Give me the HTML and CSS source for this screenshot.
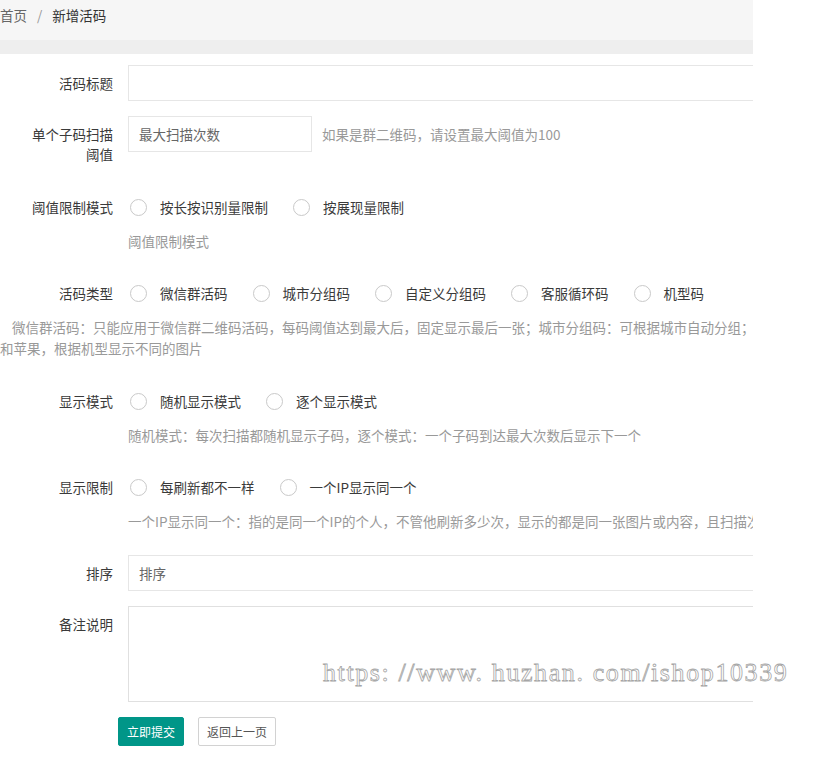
FILE: index.html
```html
<!DOCTYPE html>
<html lang="zh-CN">
<head>
<meta charset="utf-8">
<title>新增活码</title>
<link rel="stylesheet" href="styles.css">
</head>
<body>
<div class="frame">
  <div class="page">
    <div class="crumb"><span class="c-link">首页</span><span class="c-sep">/</span><span class="c-cur">新增活码</span></div>
    <div class="band"></div>
    <form class="form">
      <div class="item">
        <label class="lbl">活码标题</label>
        <div class="block"><input class="input" type="text"></div>
      </div>
      <div class="item item-tall">
        <label class="lbl">单个子码扫描阈值</label>
        <div class="block inline">
          <input class="input input-sm" type="text" placeholder="最大扫描次数">
          <span class="aux">如果是群二维码，请设置最大阈值为100</span>
        </div>
      </div>
      <div class="item">
        <label class="lbl">阈值限制模式</label>
        <div class="block">
          <div class="radios">
            <span class="radio"><i class="circle"></i>按长按识别量限制</span>
            <span class="radio"><i class="circle"></i>按展现量限制</span>
          </div>
          <div class="mid">阈值限制模式</div>
        </div>
      </div>
      <div class="item item-flush">
        <label class="lbl">活码类型</label>
        <div class="block">
          <div class="radios">
            <span class="radio"><i class="circle"></i>微信群活码</span>
            <span class="radio"><i class="circle"></i>城市分组码</span>
            <span class="radio"><i class="circle"></i>自定义分组码</span>
            <span class="radio"><i class="circle"></i>客服循环码</span>
            <span class="radio"><i class="circle"></i>机型码</span>
          </div>
        </div>
      </div>
      <div class="wide-help"><span class="first">微信群活码：只能应用于微信群二维码活码，每码阈值达到最大后，固定显示最后一张；城市分组码：可根据城市自动分组；自定义分组码：按自定义分组显示；客服循环码：循环显示客服二维码；机型码：区分安卓</span><br>和苹果，根据机型显示不同的图片</div>
      <div class="item">
        <label class="lbl">显示模式</label>
        <div class="block">
          <div class="radios">
            <span class="radio"><i class="circle"></i>随机显示模式</span>
            <span class="radio"><i class="circle"></i>逐个显示模式</span>
          </div>
          <div class="mid">随机模式：每次扫描都随机显示子码，逐个模式：一个子码到达最大次数后显示下一个</div>
        </div>
      </div>
      <div class="item">
        <label class="lbl">显示限制</label>
        <div class="block">
          <div class="radios">
            <span class="radio"><i class="circle"></i>每刷新都不一样</span>
            <span class="radio"><i class="circle"></i>一个IP显示同一个</span>
          </div>
          <div class="mid">一个IP显示同一个：指的是同一个IP的个人，不管他刷新多少次，显示的都是同一张图片或内容，且扫描次数只计算一次</div>
        </div>
      </div>
      <div class="item">
        <label class="lbl">排序</label>
        <div class="block"><input class="input" type="text" placeholder="排序"></div>
      </div>
      <div class="item">
        <label class="lbl">备注说明</label>
        <div class="block"><textarea class="textarea"></textarea></div>
      </div>
      <div class="actions">
        <button type="button" class="btn btn-primary">立即提交</button>
        <button type="button" class="btn btn-default">返回上一页</button>
      </div>
    </form>
  </div>
</div>
<div class="wm">https: //www. huzhan. com/ishop10339</div>
</body>
</html>
```
FILE: styles.css
```css
html, body {
  margin: 0;
  padding: 0;
  background: #fff;
}
body {
  font-family: "Noto Sans CJK SC", "Noto Sans", sans-serif;
  font-size: 13.5px;
  color: #333;
  position: relative;
  height: 767px;
  overflow: hidden;
}
.frame {
  width: 753px;
  overflow: hidden;
}
.page {
  width: 1000px;
}
.crumb {
  height: 40px;
  line-height: 31px;
  background: #f6f6f6;
  white-space: nowrap;
}
.c-link { color: #666; }
.c-sep { color: #999; margin: 0 10px; }
.c-cur { color: #333; }
.band {
  height: 14px;
  background: #eeeeee;
}
.form {
  padding-top: 11px;
}
.item {
  display: flex;
  align-items: flex-start;
  margin-bottom: 15px;
}
.item-tall { margin-bottom: 17px; }
.item-flush { margin-bottom: 0; }
.lbl {
  flex: none;
  width: 128px;
  box-sizing: border-box;
  padding: 8px 15px 8px 25px;
  line-height: 20px;
  text-align: right;
  color: #3a3a3a;
}
.block {
  flex: 1;
  min-width: 0;
}
.inline {
  display: flex;
  align-items: center;
}
.input {
  display: block;
  width: 100%;
  height: 36px;
  box-sizing: border-box;
  border: 1px solid #e6e6e6;
  padding: 0 0 0 10px;
  margin: 0;
  font: inherit;
  color: #333;
  background: #fff;
  outline: none;
}
.input::placeholder { color: #666; }
.input-sm {
  width: 184px;
  flex: none;
}
.aux {
  margin-left: 10px;
  color: #999;
  white-space: nowrap;
}
.radios {
  display: flex;
  align-items: center;
  height: 36px;
  padding-left: 2px;
  white-space: nowrap;
}
.radio {
  display: flex;
  align-items: center;
  margin-right: 25px;
  color: #3a3a3a;
}
.circle {
  display: block;
  width: 17px;
  height: 17px;
  box-sizing: border-box;
  border: 1px solid #c9c9c9;
  border-radius: 50%;
  margin-right: 13px;
}
.mid {
  padding: 6px 0 9px;
  line-height: 20px;
  color: #999;
  white-space: nowrap;
}
.wide-help {
  padding: 6px 0 9px;
  margin-bottom: 15px;
  line-height: 21px;
  color: #999;
  white-space: nowrap;
}
.wide-help .first {
  padding-left: 12px;
}
.textarea {
  display: block;
  width: 100%;
  height: 96px;
  box-sizing: border-box;
  border: 1px solid #e0e0e0;
  margin: 0;
  padding: 6px 10px;
  font: inherit;
  resize: none;
  outline: none;
}
.actions {
  display: flex;
  gap: 14px;
  padding-left: 118px;
}
.btn {
  height: 29px;
  box-sizing: border-box;
  padding: 0 8px;
  font-family: inherit;
  font-size: 12px;
  line-height: 27px;
  border: 1px solid;
  border-radius: 2px;
  cursor: pointer;
}
.btn-primary {
  background: #009688;
  border-color: #009688;
  color: #fff;
}
.btn-default {
  background: #fff;
  border-color: #d2d2d2;
  color: #555;
}
.wm {
  position: absolute;
  left: 323px;
  top: 658px;
  font-family: "Liberation Serif", serif;
  font-size: 26px;
  line-height: 30px;
  letter-spacing: 1.6px;
  white-space: nowrap;
  color: transparent;
  -webkit-text-stroke: 0.8px #a6a6a6;
}
```
